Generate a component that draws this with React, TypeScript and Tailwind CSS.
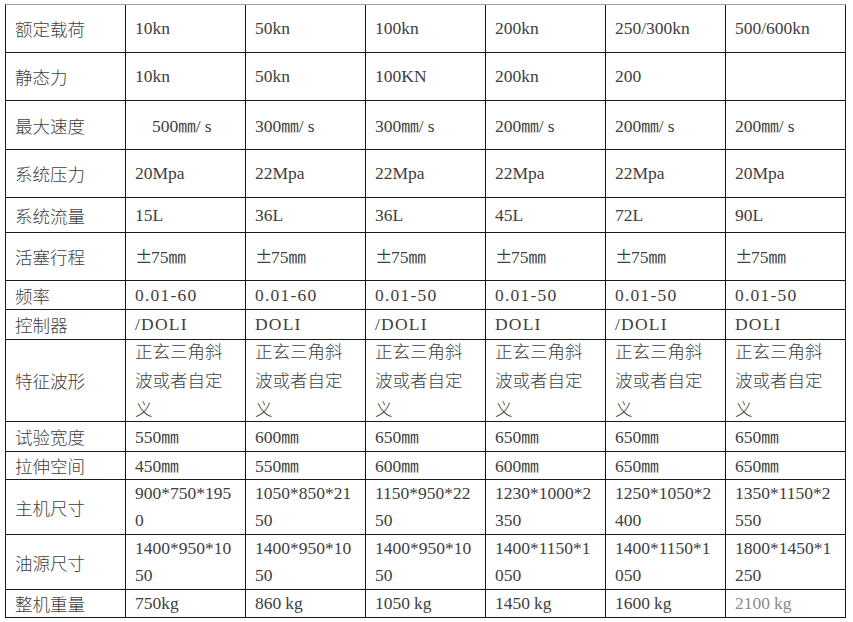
import React from "react";

type Cell = React.ReactNode;

const CJK = '"Noto Sans CJK SC", sans-serif';
const PM = () => (
  <span className="inline-block w-[16px] text-left" style={{ fontFamily: CJK }}>
    ±
  </span>
);
const MM = () => <span style={{ fontFamily: CJK }}>㎜</span>;
const SP = () => <span className="inline-block w-[4px]" />;
const Mono = ({ t }: { t: string }) => <span className="tracking-[1.2px]">{t}</span>;

const speed = (v: string) => (
  <>
    {v}
    <MM />/<SP />s
  </>
);

const rows: { h: string; label: string; cells: Cell[] }[] = [
  { h: "h-[48px]", label: "额定载荷", cells: ["10kn", "50kn", "100kn", "200kn", "250/300kn", "500/600kn"] },
  { h: "h-[48px]", label: "静态力", cells: ["10kn", "50kn", "100KN", "200kn", "200", ""] },
  {
    h: "h-[49px]",
    label: "最大速度",
    cells: [
      <span className="pl-[17px]">{speed("500")}</span>,
      speed("300"),
      speed("300"),
      speed("200"),
      speed("200"),
      speed("200"),
    ],
  },
  { h: "h-[48px]", label: "系统压力", cells: ["20Mpa", "22Mpa", "22Mpa", "22Mpa", "22Mpa", "20Mpa"] },
  { h: "h-[35px]", label: "系统流量", cells: ["15L", "36L", "36L", "45L", "72L", "90L"] },
  {
    h: "h-[48px]",
    label: "活塞行程",
    cells: [0, 1, 2, 3, 4, 5].map(() => (
      <>
        <PM />
        75
        <MM />
      </>
    )),
  },
  {
    h: "h-[29px]",
    label: "频率",
    cells: ["0.01-60", "0.01-60", "0.01-50", "0.01-50", "0.01-50", "0.01-50"].map((t) => <Mono t={t} />),
  },
  {
    h: "h-[30px]",
    label: "控制器",
    cells: ["/DOLI", "DOLI", "/DOLI", "DOLI", "/DOLI", "DOLI"].map((t) => <Mono t={t} />),
  },
  {
    h: "h-[82px]",
    label: "特征波形",
    cells: [0, 1, 2, 3, 4, 5].map(() => (
      <span className="font-light" style={{ fontFamily: CJK }}>
        正玄三角斜
        <br />
        波或者自定
        <br />义
      </span>
    )),
  },
  {
    h: "h-[30px]",
    label: "试验宽度",
    cells: ["550", "600", "650", "650", "650", "650"].map((v) => (
      <>
        {v}
        <MM />
      </>
    )),
  },
  {
    h: "h-[28px]",
    label: "拉伸空间",
    cells: ["450", "550", "600", "600", "650", "650"].map((v) => (
      <>
        {v}
        <MM />
      </>
    )),
  },
  {
    h: "h-[55px]",
    label: "主机尺寸",
    cells: [
      <>900*750*195<br />0</>,
      <>1050*850*21<br />50</>,
      <>1150*950*22<br />50</>,
      <>1230*1000*2<br />350</>,
      <>1250*1050*2<br />400</>,
      <>1350*1150*2<br />550</>,
    ],
  },
  {
    h: "h-[55px]",
    label: "油源尺寸",
    cells: [
      <>1400*950*10<br />50</>,
      <>1400*950*10<br />50</>,
      <>1400*950*10<br />50</>,
      <>1400*1150*1<br />050</>,
      <>1400*1150*1<br />050</>,
      <>1800*1450*1<br />250</>,
    ],
  },
  {
    h: "h-[28px]",
    label: "整机重量",
    cells: [
      "750kg",
      <>860<SP />kg</>,
      <>1050<SP />kg</>,
      <>1450<SP />kg</>,
      <>1600<SP />kg</>,
      <span className="text-[#8a8a8a]">2100<SP />kg</span>,
    ],
  },
];

export default function App() {
  return (
    <div
      className="bg-white w-[853px] h-[622px] pt-[4px] pl-[5px] text-[17.5px] leading-[27px] text-[#404040]"
      style={{ fontFamily: '"Liberation Serif", "Noto Sans CJK SC", serif' }}
    >
      <div className="w-[841px] border-l border-t border-l-[#1a1a1a] border-t-[#a3a3a3]">
        {rows.map((r, i) => (
          <div key={i} className={`flex ${r.h}`}>
            <div
              className="w-[120px] shrink-0 border-r border-b border-[#1a1a1a] flex items-center pl-[9px] whitespace-nowrap font-light"
              style={{ fontFamily: CJK }}
            >
              {r.label}
            </div>
            {r.cells.map((c, j) => (
              <div
                key={j}
                className="w-[120px] shrink-0 border-r border-b border-[#1a1a1a] flex items-center pl-[9px] whitespace-nowrap"
              >
                <div className="leading-[27px]">{c}</div>
              </div>
            ))}
          </div>
        ))}
      </div>
    </div>
  );
}
